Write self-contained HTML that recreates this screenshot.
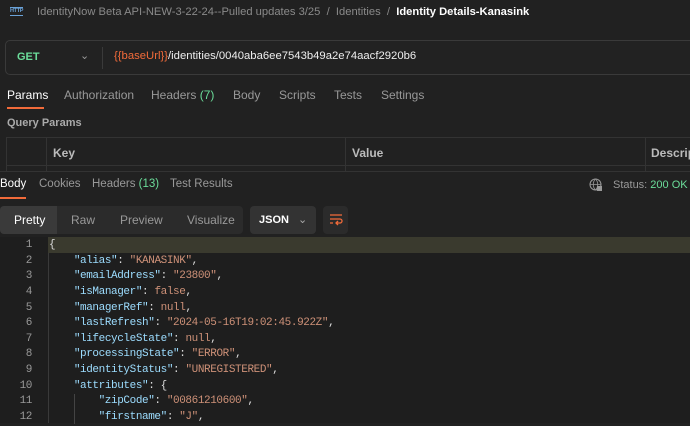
<!DOCTYPE html>
<html><head><style>
*{margin:0;padding:0;box-sizing:border-box}
body{width:690px;height:423px;overflow:hidden;background:#212121;font-family:"Liberation Sans",sans-serif;color:#ccc;position:relative;font-size:12px}
.a{position:absolute;white-space:nowrap}
.mono{font-family:"Liberation Mono",monospace;font-size:11px;letter-spacing:-0.4px}
.k{color:#9cdcfe}.s{color:#ce9178}.p{color:#ddd}
.t{color:#999;font-size:12px;top:88px}
</style></head><body>
<div class="a" style="left:10px;top:7px;font-size:5.5px;color:#6aa2d8;font-weight:bold;border-top:1px solid #6aa2d8;border-bottom:1px solid #6aa2d8;line-height:7px;letter-spacing:-0.3px">HTTP</div>
<div class="a" style="left:37px;top:6px;font-size:11.2px;color:#8a8a8a">IdentityNow Beta API-NEW-3-22-24--Pulled updates 3/25 &nbsp;/&nbsp; Identities &nbsp;/&nbsp; <b style="color:#fff">Identity Details-Kanasink</b></div>
<div class="a" style="left:5px;top:40px;width:700px;height:35px;border:1px solid #3a3a3a;border-radius:5px;background:#222"></div>
<div class="a" style="left:17px;top:51px;color:#6bdd9a;font-weight:bold;font-size:11px">GET</div>
<div class="a" style="left:80px;top:49px;color:#999;font-size:11px">&#8964;</div>
<div class="a" style="left:102px;top:47px;width:1px;height:22px;background:#3a3a3a"></div>
<div class="a" style="left:114px;top:50px;font-size:11.3px;color:#eee"><span style="color:#f26b3a">{{baseUrl}}</span>/identities/0040aba6ee7543b49a2e74aacf2920b6</div>
<div class="a t" style="left:7px;color:#fff">Params</div>
<div class="a t" style="left:64px">Authorization</div>
<div class="a t" style="left:151px">Headers <span style="color:#6bdd9a">(7)</span></div>
<div class="a t" style="left:233px">Body</div>
<div class="a t" style="left:279px">Scripts</div>
<div class="a t" style="left:334px">Tests</div>
<div class="a t" style="left:381px">Settings</div>
<div class="a" style="left:7px;top:107px;width:37px;height:2px;background:#f26b3a"></div>
<div class="a" style="left:7px;top:117px;color:#aaa;font-size:11px;font-weight:bold">Query Params</div>
<div class="a" style="left:6px;top:137px;width:700px;height:34px;border-top:1px solid #333"></div>
<div class="a" style="left:6px;top:165px;width:700px;height:1px;background:#333"></div>
<div class="a" style="left:6px;top:137px;width:1px;height:34px;background:#333"></div>
<div class="a" style="left:46px;top:137px;width:1px;height:34px;background:#333"></div>
<div class="a" style="left:345px;top:137px;width:1px;height:34px;background:#333"></div>
<div class="a" style="left:645px;top:137px;width:1px;height:34px;background:#333"></div>
<div class="a" style="left:53px;top:146px;color:#bbb;font-weight:bold">Key</div>
<div class="a" style="left:352px;top:146px;color:#bbb;font-weight:bold">Value</div>
<div class="a" style="left:651px;top:146px;color:#bbb;font-weight:bold">Descrip</div>
<div class="a" style="left:0;top:171px;width:690px;height:1px;background:#333"></div>
<div class="a" style="left:0;top:178px;font-size:11.5px;color:#fff">Body</div>
<div class="a" style="left:39px;top:178px;font-size:11.5px;color:#999">Cookies</div>
<div class="a" style="left:92px;top:178px;font-size:11.5px;color:#999">Headers <span style="color:#6bdd9a">(13)</span></div>
<div class="a" style="left:170px;top:178px;font-size:11.5px;color:#999">Test Results</div>
<div class="a" style="left:0;top:197px;width:26px;height:2px;background:#f26b3a"></div>
<svg class="a" style="left:589px;top:178px" width="14" height="14"><circle cx="6.5" cy="6.5" r="5.5" stroke="#999" fill="none"/><path d="M1 6.5h11M6.5 1c-3 3-3 8 0 11M6.5 1c3 3 3 8 0 11" stroke="#999" fill="none" stroke-width=".8"/><rect x="8" y="8" width="5" height="5" fill="#999"/></svg>
<div class="a" style="left:613px;top:179px;font-size:11px;color:#999">Status: <span style="color:#6bdd9a">200 OK</span></div>
<div class="a" style="left:0;top:206px;width:243px;height:28px;background:#2b2b2b;border-radius:4px"></div>
<div class="a" style="left:0;top:206px;width:57px;height:28px;background:#3a3a3a;border-radius:4px 0 0 4px"></div>
<div class="a" style="left:14px;top:213px;font-size:12px;color:#fff">Pretty</div>
<div class="a" style="left:71px;top:213px;font-size:12px;color:#999">Raw</div>
<div class="a" style="left:120px;top:213px;font-size:12px;color:#999">Preview</div>
<div class="a" style="left:187px;top:213px;font-size:12px;color:#999">Visualize</div>
<div class="a" style="left:250px;top:206px;width:66px;height:28px;background:#333;border-radius:4px"></div>
<div class="a" style="left:259px;top:213px;font-size:11px;color:#fff;font-weight:bold">JSON <span style="color:#aaa;font-weight:normal;margin-left:6px">&#8964;</span></div>
<div class="a" style="left:323px;top:206px;width:25px;height:28px;background:#2b2b2b;border-radius:4px"></div>
<svg class="a" style="left:329px;top:212px" width="14" height="14"><path d="M1 3h12M1 7h10a2 2 0 010 4H7M9 9l-2 2 2 2M1 11h3" stroke="#f26b3a" stroke-width="1.3" fill="none"/></svg>
<div class="a" style="left:0;top:237px;width:690px;height:186px;background:#1e1e1e"></div>
<div class="a" style="left:48px;top:237px;width:642px;height:16px;background:#3a3a2e"></div>
<div class="a" style="left:48px;top:253px;width:1px;height:170px;background:#3a3a3a"></div>
<div class="a" style="left:74px;top:394px;width:1px;height:30px;background:#444"></div>
<div class="a mono" style="left:0;top:238px;width:32px;text-align:right;line-height:15.64px;color:#999">1<br>2<br>3<br>4<br>5<br>6<br>7<br>8<br>9<br>10<br>11<br>12</div>
<div class="a mono p" style="left:49px;top:238px;line-height:15.64px;white-space:pre">{
    <span class="k">"alias"</span>: <span class="s">"KANASINK"</span>,
    <span class="k">"emailAddress"</span>: <span class="s">"23800"</span>,
    <span class="k">"isManager"</span>: <span class="s">false</span>,
    <span class="k">"managerRef"</span>: <span class="s">null</span>,
    <span class="k">"lastRefresh"</span>: <span class="s">"2024-05-16T19:02:45.922Z"</span>,
    <span class="k">"lifecycleState"</span>: <span class="s">null</span>,
    <span class="k">"processingState"</span>: <span class="s">"ERROR"</span>,
    <span class="k">"identityStatus"</span>: <span class="s">"UNREGISTERED"</span>,
    <span class="k">"attributes"</span>: {
        <span class="k">"zipCode"</span>: <span class="s">"00861210600"</span>,
        <span class="k">"firstname"</span>: <span class="s">"J"</span>,</div>
</body></html>
